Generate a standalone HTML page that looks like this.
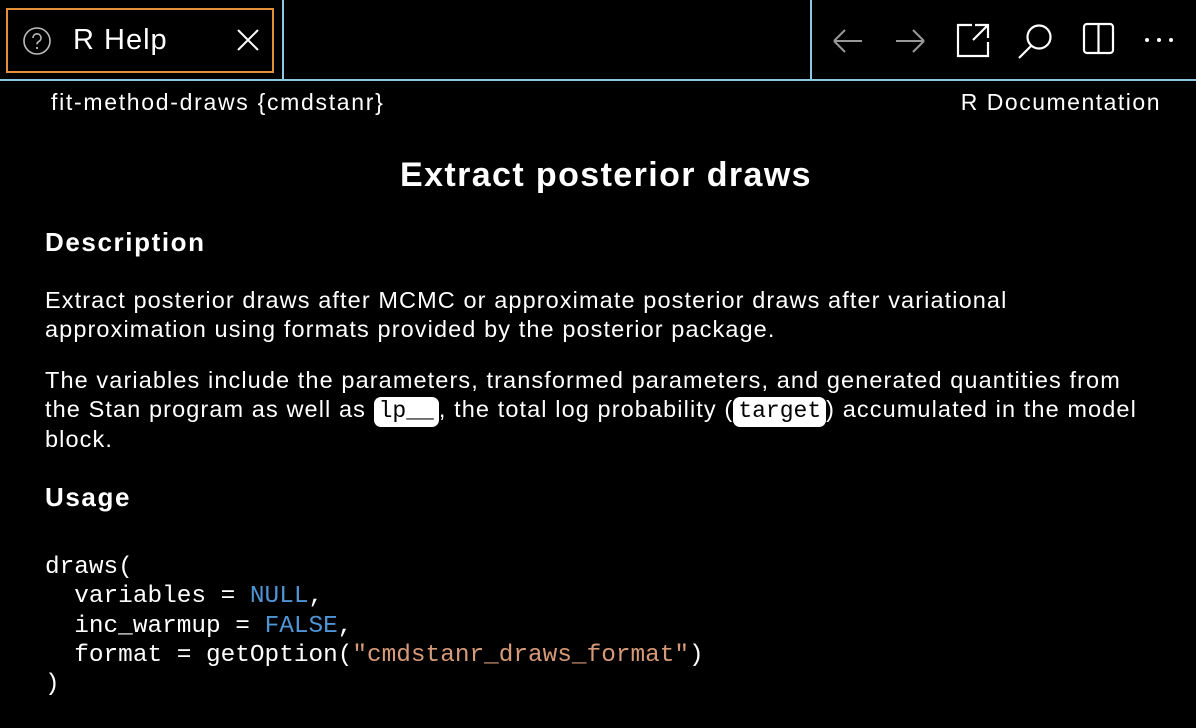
<!DOCTYPE html>
<html><head><meta charset="utf-8"><style>
body{margin:0;width:1196px;height:728px;background:#000;color:#fff;font-family:"Liberation Sans",sans-serif;position:relative;overflow:hidden}
.abs{position:absolute}
.p{position:absolute;left:45px;font-size:23.5px;letter-spacing:1.1px;line-height:28.5px;white-space:nowrap}
h2{position:absolute;left:45px;margin:0;font-size:26px;letter-spacing:1.6px;font-weight:bold}
code{font-family:"Liberation Mono",monospace;background:#fff;color:#000;border-radius:7px;padding:1px 5px 3px;font-size:23px;letter-spacing:0}
pre{position:absolute;left:45px;top:553px;margin:0;font-family:"Liberation Mono",monospace;font-size:24.4px;line-height:29.3px}
.b{color:#4f94d4}.s{color:#d69a78}
</style></head><body>
<div class="abs" style="left:6px;top:8px;width:264px;height:61px;border:2px solid #e58f3a"></div>
<svg class="abs" style="left:22px;top:26px" width="30" height="30" viewBox="0 0 30 30"><circle cx="15" cy="15" r="13" fill="none" stroke="#bbb" stroke-width="1.6"/><path d="M11 12a4 4 0 1 1 6 3.3c-1.3.8-2 1.4-2 2.9" fill="none" stroke="#bbb" stroke-width="1.6"/><circle cx="15" cy="22" r="1.1" fill="#bbb"/></svg>
<div class="abs" style="left:73px;top:24px;font-size:29px;letter-spacing:1px">R Help</div>
<svg class="abs" style="left:236px;top:28px" width="24" height="24"><path d="M2 2L22 22M22 2L2 22" stroke="#fff" stroke-width="2"/></svg>
<div class="abs" style="left:282px;top:0;width:2px;height:80px;background:#8cc8e2"></div>
<div class="abs" style="left:810px;top:0;width:2px;height:80px;background:#8cc8e2"></div>
<div class="abs" style="left:0;top:79px;width:1196px;height:2px;background:#8cc8e2"></div>
<svg class="abs" style="left:830px;top:20px" width="350" height="40">
<path d="M4 21H32M4 21L15 10M4 21L15 32" stroke="#999" stroke-width="2" fill="none"/>
<path d="M66 21H94M94 21L83 10M94 21L83 32" stroke="#999" stroke-width="2" fill="none"/>
<path d="M142 5H128V36H158V22M145 5H158V18M158 5L143 20" stroke="#fff" stroke-width="2.2" fill="none"/>
<circle cx="209" cy="17" r="11.5" stroke="#fff" stroke-width="2.2" fill="none"/><path d="M201 26L189 38" stroke="#fff" stroke-width="2.2"/>
<rect x="254" y="4" width="29" height="29" rx="3" stroke="#fff" stroke-width="2.2" fill="none"/><path d="M268.5 4V33" stroke="#fff" stroke-width="2.2"/>
<circle cx="317" cy="20" r="2" fill="#fff"/><circle cx="329" cy="20" r="2" fill="#fff"/><circle cx="341" cy="20" r="2" fill="#fff"/>
</svg>
<div class="abs" style="left:51px;top:89px;font-size:23px;letter-spacing:1.7px">fit-method-draws {cmdstanr}</div>
<div class="abs" style="right:35px;top:89px;font-size:23px;letter-spacing:1.5px">R Documentation</div>
<div class="abs" style="left:0;width:1212px;text-align:center;top:156px;font-size:34px;letter-spacing:1.4px;font-weight:bold">Extract posterior draws</div>
<h2 style="top:227px">Description</h2>
<div class="p" style="top:286px">Extract posterior draws after MCMC or approximate posterior draws after variational<br>approximation using formats provided by the posterior package.</div>
<div class="p" style="top:366px">The variables include the parameters, transformed parameters, and generated quantities from<br>the Stan program as well as <code>lp__</code>, the total log probability (<code>target</code>) accumulated in the model<br>block.</div>
<h2 style="top:482px">Usage</h2>
<pre>draws(
  variables = <span class="b">NULL</span>,
  inc_warmup = <span class="b">FALSE</span>,
  format = getOption(<span class="s">"cmdstanr_draws_format"</span>)
)</pre>
</body></html>
